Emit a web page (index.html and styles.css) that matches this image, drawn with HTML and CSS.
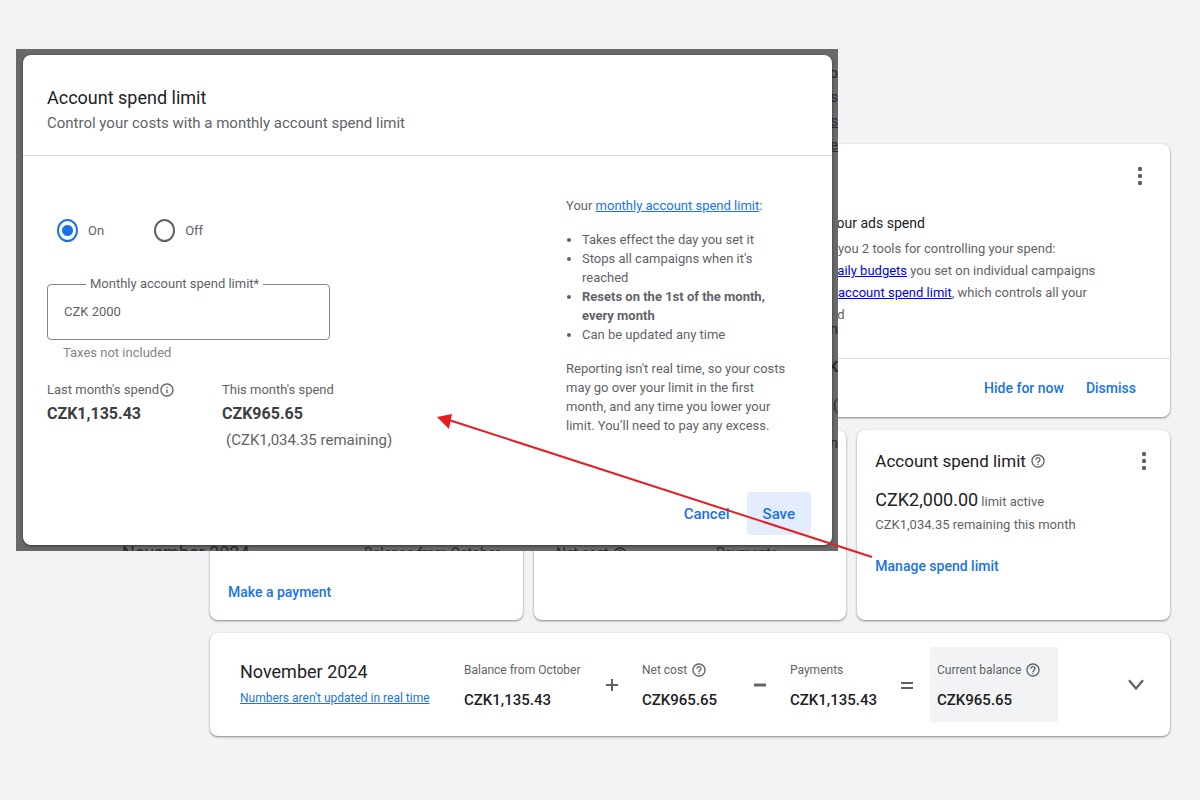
FILE: index.html
```html
<!DOCTYPE html>
<html lang="en">
<head>
  <meta charset="utf-8">
  <title>Billing summary</title>
  <link rel="stylesheet" href="styles.css">
</head>
<body>
  <svg class="sprite" xmlns="http://www.w3.org/2000/svg">
    <symbol id="help" viewBox="0 0 24 24">
      <path fill="currentColor" d="M11 18h2v-2h-2v2zm1-16C6.48 2 2 6.48 2 12s4.48 10 10 10 10-4.48 10-10S17.52 2 12 2zm0 18c-4.41 0-8-3.59-8-8s3.59-8 8-8 8 3.59 8 8-3.59 8-8 8zm0-14c-2.21 0-4 1.79-4 4h2c0-1.1.9-2 2-2s2 .9 2 2c0 2-3 1.75-3 5h2c0-2.25 3-2.5 3-5 0-2.21-1.79-4-4-4z"/>
    </symbol>
    <symbol id="info" viewBox="0 0 24 24">
      <path fill="currentColor" d="M11 7h2v2h-2zm0 4h2v6h-2zm1-9C6.48 2 2 6.48 2 12s4.48 10 10 10 10-4.48 10-10S17.52 2 12 2zm0 18c-4.41 0-8-3.59-8-8s3.59-8 8-8 8 3.59 8 8-3.59 8-8 8z"/>
    </symbol>
    <symbol id="more" viewBox="0 0 24 24">
      <circle cx="12" cy="5" r="2.2" fill="currentColor"/>
      <circle cx="12" cy="12" r="2.2" fill="currentColor"/>
      <circle cx="12" cy="19" r="2.2" fill="currentColor"/>
    </symbol>
  </svg>

  <main class="summary">
    <section class="card tips">
      <div class="tips-body">
        <button class="icon-button" aria-label="More options"><svg class="more"><use href="#more"/></svg></button>
        <h3>your ads spend</h3>
        <p class="indent">you 2 tools for controlling your spend:</p>
        <p><a href="#">daily budgets</a> you set on individual campaigns</p>
        <p class="indent"><a href="#">account spend limit</a>, which controls all your</p>
        <p>nd</p>
      </div>
      <div class="tips-actions">
        <button class="text-button">Hide for now</button>
        <button class="text-button">Dismiss</button>
      </div>
    </section>

    <div class="card-row">
      <section class="card small-card payment">
        <a class="action" href="#">Make a payment</a>
      </section>
      <section class="card small-card"></section>
      <section class="card small-card limit">
        <header>
          <h2>Account spend limit</h2>
          <svg class="icon"><use href="#help"/></svg>
          <button class="icon-button" aria-label="More options"><svg class="more"><use href="#more"/></svg></button>
        </header>
        <p><span class="limit-amount">CZK2,000.00</span> limit active</p>
        <p>CZK1,034.35 remaining this month</p>
        <a class="action" href="#">Manage spend limit</a>
      </section>
    </div>

    <section class="card balance">
      <div>
        <h2>November 2024</h2>
        <a class="realtime" href="#">Numbers aren't updated in real time</a>
      </div>
      <div class="figure">
        <span>Balance from October</span>
        <strong>CZK1,135.43</strong>
      </div>
      <svg class="operator" viewBox="0 0 14 14"><path d="M1 7h12M7 1v12"/></svg>
      <div class="figure">
        <span>Net cost <svg class="icon"><use href="#help"/></svg></span>
        <strong>CZK965.65</strong>
      </div>
      <svg class="operator thick" viewBox="0 0 14 14"><path d="M1 7h12"/></svg>
      <div class="figure">
        <span>Payments</span>
        <strong>CZK1,135.43</strong>
      </div>
      <svg class="operator" viewBox="0 0 14 14"><path d="M1 5h12M1 10h12"/></svg>
      <div class="figure current">
        <span>Current balance <svg class="icon"><use href="#help"/></svg></span>
        <strong>CZK965.65</strong>
      </div>
      <button class="icon-button expand" aria-label="Show details">
        <svg viewBox="0 0 16 12"><path d="M2 2l6 7 6-7"/></svg>
      </button>
    </section>
  </main>

  <div class="backdrop">
    <div class="behind behind-side" aria-hidden="true">
      <span>to</span>
      <span>als</span>
      <u>ets</u>
      <u>spe</u>
    </div>
    <div class="behind behind-middle" aria-hidden="true">
      <span>on</span>
      <b>ZK</b>
      <span>Z(</span>
      <span>en</span>
    </div>
    <div class="behind behind-bottom" aria-hidden="true">
      <span class="month">November 2024</span>
      <span>Balance from October</span>
      <span>Net cost <svg class="icon"><use href="#help"/></svg></span>
      <span>Payments</span>
    </div>

    <form class="dialog" role="dialog" aria-labelledby="dialog-title">
      <header class="dialog-header">
        <h2 id="dialog-title">Account spend limit</h2>
        <p>Control your costs with a monthly account spend limit</p>
      </header>

      <div class="dialog-body">
        <div class="settings">
          <div class="radios">
            <label><input type="radio" name="state" checked> On</label>
            <label><input type="radio" name="state"> Off</label>
          </div>

          <fieldset class="field">
            <legend><label for="limit">Monthly account spend limit*</label></legend>
            <input id="limit" type="text" value="CZK 2000">
          </fieldset>
          <p class="hint">Taxes not included</p>

          <div class="spends">
            <div>
              <p class="spend-label">Last month's spend<svg class="icon"><use href="#info"/></svg></p>
              <strong>CZK1,135.43</strong>
            </div>
            <div>
              <p class="spend-label">This month's spend</p>
              <strong>CZK965.65</strong>
              <p class="remaining">(CZK1,034.35 remaining)</p>
            </div>
          </div>
        </div>

        <aside class="notes">
          <p>Your <a href="#">monthly account spend limit</a>:</p>
          <ul>
            <li>Takes effect the day you set it</li>
            <li>Stops all campaigns when it's reached</li>
            <li><b>Resets on the 1st of the month, every month</b></li>
            <li>Can be updated any time</li>
          </ul>
          <p>Reporting isn't real time, so your costs may go over your limit in the first month, and any time you lower your limit. You’ll need to pay any excess.</p>
        </aside>
      </div>

      <footer class="dialog-actions">
        <button type="button" class="text-button">Cancel</button>
        <button type="submit" class="text-button save">Save</button>
      </footer>
    </form>
  </div>

  <svg class="arrow" viewBox="0 0 436 150" aria-hidden="true">
    <path class="arrow-line" d="M12 9L435 146"/>
    <path class="arrow-head" d="M0 6L15 3L12 18z"/>
  </svg>
</body>
</html>
```
FILE: styles.css
```css
:root {
  --bg: #f1f3f4;
  --text: #202124;
  --muted: #5f6368;
  --blue: #1a73e8;
  --line: #dadce0;
  --red: #e31e24;
}

* {
  box-sizing: border-box;
}

body {
  position: relative;
  margin: 0;
  background: var(--bg);
  color: var(--muted);
  font-family: Roboto, "Liberation Sans", sans-serif;
  font-size: 13px;
}

h2,
h3,
p,
ul {
  margin: 0;
}

h2 {
  color: var(--text);
  font-size: 18px;
  font-weight: 400;
  line-height: 26px;
}

button {
  padding: 0;
  border: none;
  background: none;
  font: inherit;
  cursor: pointer;
}

.sprite {
  display: none;
}

.icon {
  width: 16px;
  height: 16px;
  color: var(--muted);
}

.icon-button {
  display: flex;
  color: var(--muted);
}

.more {
  width: 24px;
  height: 24px;
}

.text-button,
.action {
  color: var(--blue);
  font-size: 14px;
  font-weight: 500;
  line-height: 20px;
  text-decoration: none;
}

/* Page */

.summary {
  display: flex;
  flex-direction: column;
  gap: 13px;
  padding: 144px 30px 64px 210px;
}

.card {
  border-radius: 8px;
  background: #fff;
  box-shadow: 0 1px 2px rgba(60, 64, 67, 0.5), 0 1px 3px rgba(60, 64, 67, 0.15);
}

.tips-body {
  padding: 20px 18px 32px 620px;
  line-height: 22px;
}

.tips-body .icon-button {
  margin: 0 0 23px auto;
}

.tips-body h3 {
  padding-bottom: 3px;
  color: var(--text);
  font-size: 14px;
  font-weight: 400;
  line-height: 24px;
}

.tips-body a {
  color: #0000ee;
}

.tips-body .indent {
  padding-left: 8px;
}

.tips-actions {
  display: flex;
  justify-content: flex-end;
  gap: 22px;
  padding: 19px 34px;
  border-top: 1px solid var(--line);
}

.card-row {
  display: grid;
  grid-template-columns: repeat(3, 1fr);
  gap: 11px;
}

.small-card {
  min-height: 190px;
  padding: 18px;
  line-height: 20px;
}

.payment {
  display: flex;
  align-items: flex-end;
}

.limit header {
  display: flex;
  align-items: center;
  gap: 4px;
  padding-bottom: 14px;
}

.limit h2 {
  font-size: 17px;
}

.limit .icon-button {
  margin: 0 -4px 0 auto;
}

.limit p {
  line-height: 23px;
}

.limit-amount {
  color: var(--text);
  font-size: 18px;
}

.limit .action {
  display: inline-block;
  padding-top: 20px;
}

.balance {
  display: grid;
  grid-template-columns: 224px 141px 37px 111px 37px 110px 30px 128px 1fr;
  align-items: center;
  padding: 14px 24px 14px 30px;
  font-size: 12px;
}

.realtime {
  color: var(--blue);
  line-height: 26px;
}

.figure {
  display: flex;
  flex-direction: column;
  gap: 8px;
  padding-top: 3px;
}

.figure span {
  display: flex;
  align-items: center;
  gap: 4px;
  line-height: 20px;
}

.figure strong {
  color: var(--text);
  font-size: 15px;
  font-weight: 500;
  line-height: 24px;
}

.operator {
  width: 14px;
  height: 14px;
  fill: none;
  stroke: var(--muted);
  stroke-width: 2;
}

.operator.thick {
  stroke-width: 3;
}

.current {
  padding: 13px 7px 10px;
  border-radius: 2px;
  background: var(--bg);
}

.expand {
  margin-left: auto;
}

.expand svg {
  width: 20px;
  height: 14px;
  fill: none;
  stroke: var(--muted);
  stroke-width: 2;
}

/* Spend limit dialog, with the dimmed page around it */

.backdrop {
  position: absolute;
  top: 49px;
  left: 16px;
  width: 822px;
  padding: 6px 6px 6px 7px;
  overflow: hidden;
  background: #68696b;
}

.behind {
  position: absolute;
  color: #292a2c;
  font-size: 15px;
  line-height: 24px;
}

.behind-side,
.behind-middle {
  right: 0;
  display: flex;
  flex-direction: column;
  align-items: flex-end;
}

.behind-side {
  top: 12px;
}

.behind-middle {
  top: 268px;
  gap: 14px;
}

.behind-bottom {
  bottom: -14px;
  left: 106px;
  display: grid;
  grid-template-columns: 242px 192px 160px auto;
  width: 700px;
  font-size: 14px;
}

.behind-bottom .month {
  font-size: 18px;
}

.behind-bottom .icon {
  vertical-align: middle;
  color: inherit;
}

.dialog {
  position: relative;
  border-radius: 8px;
  background: #fff;
  box-shadow: 0 1px 3px rgba(0, 0, 0, 0.5);
}

.dialog-header {
  padding: 30px 24px 20px;
  border-bottom: 1px solid var(--line);
}

.dialog-header p {
  font-size: 15px;
  line-height: 24px;
}

.dialog-body {
  display: grid;
  grid-template-columns: 1fr 224px;
  padding: 40px 42px 40px 24px;
}

.settings {
  padding-top: 22px;
}

.radios {
  display: flex;
  gap: 50px;
  padding-left: 10px;
}

.radios label {
  display: flex;
  align-items: center;
  gap: 10px;
  height: 24px;
}

.radios input {
  width: 21px;
  height: 23px;
  margin: 0;
  border: 2px solid var(--muted);
  border-radius: 50%;
  appearance: none;
}

.radios input:checked {
  border-color: var(--blue);
  background: radial-gradient(circle, var(--blue) 5px, #fff 6px);
}

.field {
  width: 283px;
  margin: 34px 0 3px;
  padding: 9px 16px 18px;
  border: 1px solid #80868b;
  border-radius: 4px;
}

.field legend {
  margin-left: 22px;
  padding: 0 4px;
  line-height: 16px;
}

.field input {
  display: block;
  width: 100%;
  height: 20px;
  padding: 0;
  border: none;
  outline: none;
  color: var(--muted);
  font: inherit;
}

.hint {
  padding-left: 16px;
  color: #80868b;
  line-height: 20px;
}

.spends {
  display: grid;
  grid-template-columns: 175px auto;
  padding-top: 17px;
}

.spend-label {
  display: flex;
  align-items: center;
  line-height: 20px;
}

.spends strong {
  color: #3c4043;
  font-size: 16px;
  line-height: 28px;
}

.remaining {
  padding-left: 4px;
  font-size: 15px;
  line-height: 24px;
}

.notes {
  line-height: 19px;
}

.notes a {
  color: var(--blue);
}

.notes ul {
  margin: 15px 0;
  padding-left: 16px;
}

.dialog-actions {
  display: flex;
  justify-content: flex-end;
  gap: 17px;
  padding: 0 21px 10px;
}

.dialog-actions .text-button {
  font-size: 15px;
}

.save {
  padding: 12px 16px 11px;
  border-radius: 4px;
  background: #e3edfb;
}

/* Arrow from the card link to the dialog */

.arrow {
  position: absolute;
  top: 411px;
  left: 437px;
  width: 436px;
  height: 150px;
}

.arrow-line {
  stroke: var(--red);
  stroke-width: 2;
}

.arrow-head {
  fill: var(--red);
}
```
